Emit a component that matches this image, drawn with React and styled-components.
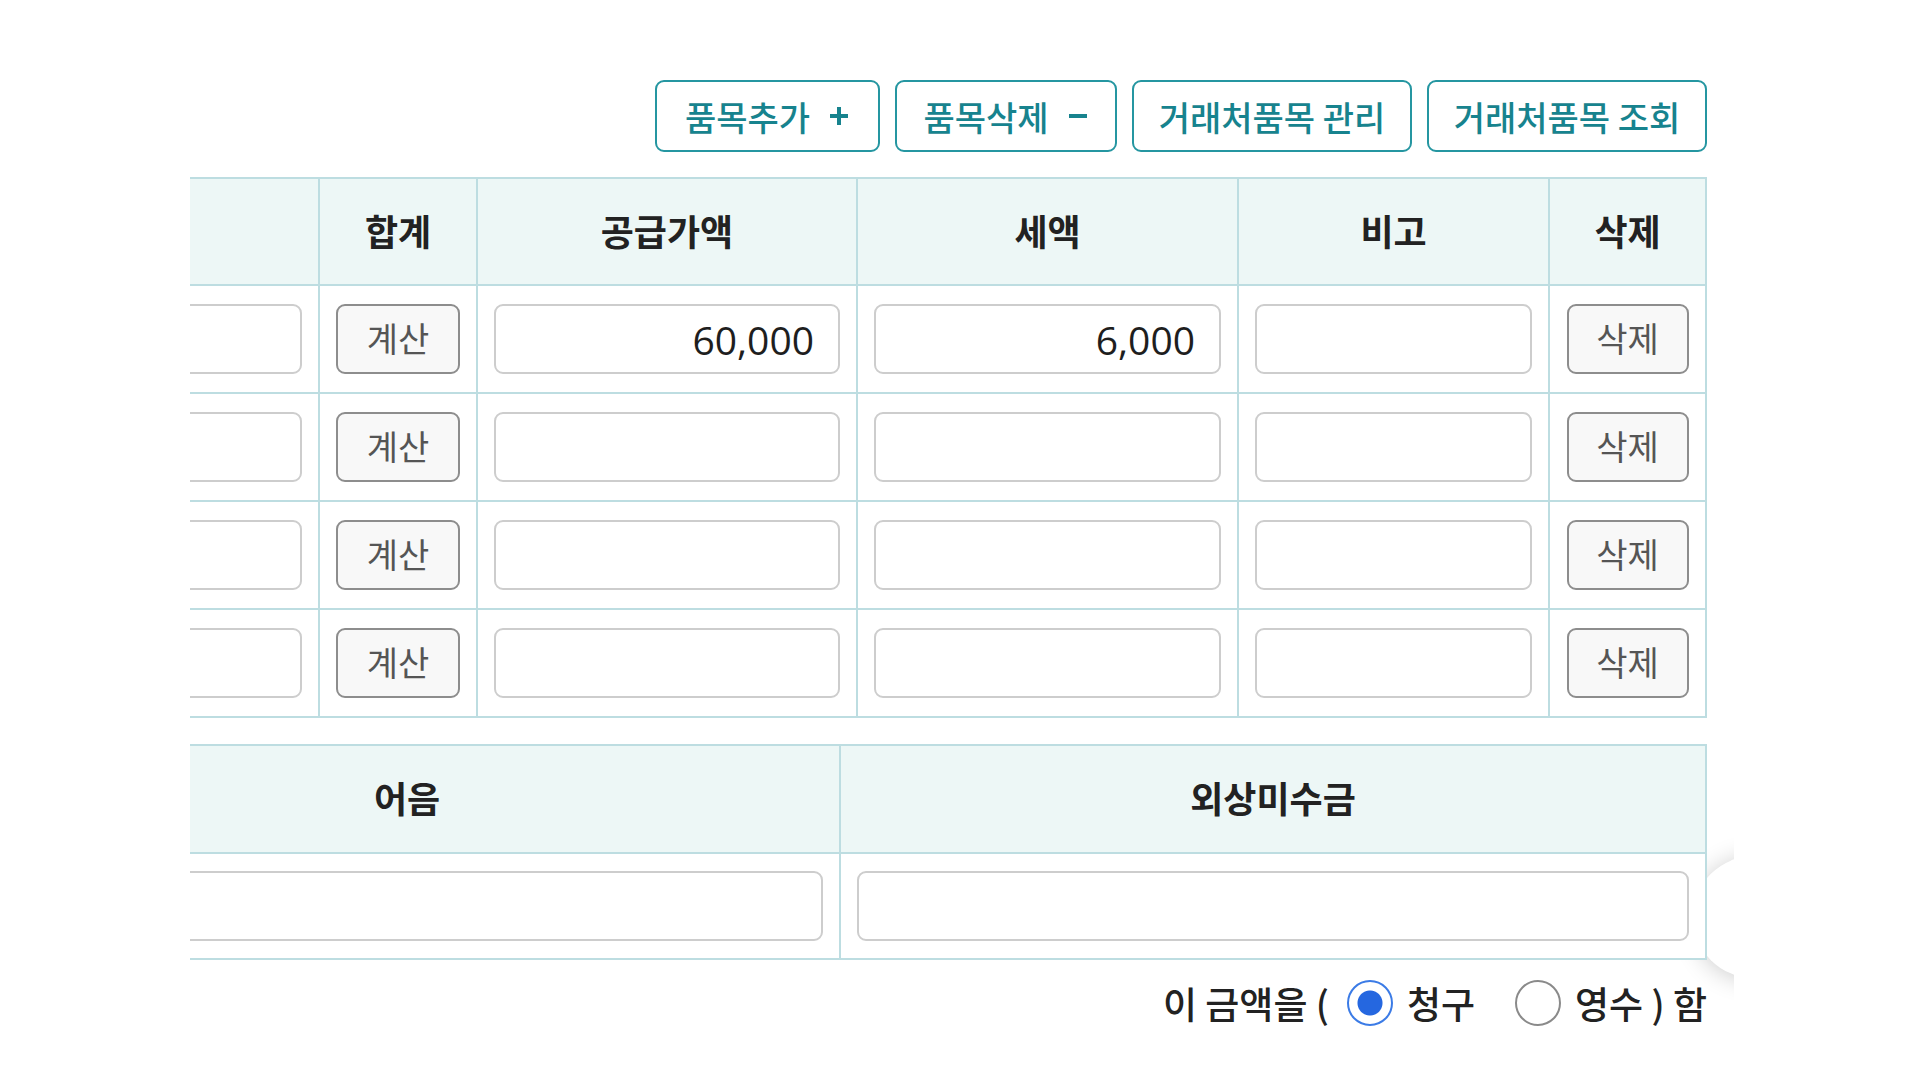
import React from "react";
import styled, { createGlobalStyle } from "styled-components";

const GlobalStyle = createGlobalStyle`
  body {
    margin: 0;
    background: #fff;
    font-family: "Noto Sans CJK KR", "Noto Sans", sans-serif;
    color: #222;
  }
`;

const Frame = styled.div`
  position: relative;
  width: 1734px;
  height: 1080px;
  box-sizing: border-box;
  padding: 80px 27px 0 190px;
  overflow: hidden;
`;

// floating round button peeking out at the right edge, behind the tables
const FloatCircle = styled.div`
  position: absolute;
  left: 1693px;
  top: 856px;
  width: 122px;
  height: 122px;
  border-radius: 50%;
  background: #fff;
  box-shadow: 0 2px 24px rgba(0, 0, 0, 0.2);
  z-index: 0;
`;

const Content = styled.div`
  position: relative;
  z-index: 1;
`;

const Toolbar = styled.div`
  display: flex;
  justify-content: flex-end;
  gap: 15px;
`;

const ToolButton = styled.button`
  display: flex;
  align-items: center;
  justify-content: center;
  gap: 18px;
  width: ${(p) => p.w}px;
  height: 72px;
  box-sizing: border-box;
  padding: 0;
  border: 2px solid #2596a1;
  border-radius: 9px;
  background: #fff;
  color: #17838e;
  font-family: "Noto Sans CJK KR", sans-serif;
  font-size: 34px;
  font-weight: 500;
  svg {
    width: 22px;
    height: 22px;
  }
`;

// the tables are wider than the view; they hang off to the left and are clipped
const TableWrap = styled.div`
  display: flex;
  justify-content: flex-end;
  overflow: hidden;
  margin-top: ${(p) => p.mt}px;
`;

const Table = styled.table`
  flex-shrink: 0;
  border-collapse: collapse;
  table-layout: fixed;
  background: #fff;
  th,
  td {
    border: 2px solid #bddde1;
    box-sizing: border-box;
  }
  th {
    height: ${(p) => p.headH}px;
    padding: 0 0 4px;
    background: #edf7f6;
    font-size: 36px;
    font-weight: 700;
    color: #222;
    text-align: center;
  }
  td {
    height: ${(p) => p.rowH}px;
    padding: 0 16px;
    text-align: center;
  }
`;

const Field = styled.input`
  display: block;
  width: 100%;
  height: 70px;
  box-sizing: border-box;
  border: 2px solid #cdcdcd;
  border-radius: 9px;
  padding: 0 24px;
  background: #fff;
  font-family: "Open Sans", "Noto Sans CJK KR", sans-serif;
  font-size: 39px;
  color: #1e1e1e;
  text-align: right;
  outline: none;
`;

const CellButton = styled.button`
  width: ${(p) => p.w}px;
  height: 70px;
  box-sizing: border-box;
  border: 2px solid #8d8d8d;
  border-radius: 9px;
  background: #f8f8f8;
  color: #555;
  font-family: "Noto Sans CJK KR", sans-serif;
  font-size: 34px;
  padding: 0 0 3px;
`;

const AmountRow = styled.div`
  display: flex;
  justify-content: flex-end;
  align-items: center;
  margin-top: 16px;
  font-size: 37px;
  font-weight: 500;
  color: #222;
  span {
    white-space: pre;
  }
`;

const Radio = styled.span`
  display: inline-block;
  flex-shrink: 0;
  width: 46px;
  height: 46px;
  box-sizing: border-box;
  border-radius: 50%;
  margin: 0 14px 0 ${(p) => p.ml}px;
  border: 2px solid ${(p) => (p.checked ? "#3b7be6" : "#8a8a8a")};
  background: ${(p) =>
    p.checked
      ? "radial-gradient(circle, #2567e0 0 12px, #fff 13px)"
      : "#fff"};
`;

const PlusIcon = () => (
  <svg viewBox="0 0 22 22">
    <path d="M11 2v18M2 11h18" stroke="currentColor" strokeWidth="4" />
  </svg>
);

const MinusIcon = () => (
  <svg viewBox="0 0 22 22">
    <path d="M2 11h18" stroke="currentColor" strokeWidth="4" />
  </svg>
);

const rows = [
  { supply: "60,000", tax: "6,000" },
  { supply: "", tax: "" },
  { supply: "", tax: "" },
  { supply: "", tax: "" },
];

const App = () => {
  return (
    <>
      <GlobalStyle />
      <Frame>
        <FloatCircle />
        <Content>
          <Toolbar>
            <ToolButton w={225}>
              품목추가 <PlusIcon />
            </ToolButton>
            <ToolButton w={222}>
              품목삭제 <MinusIcon />
            </ToolButton>
            <ToolButton w={280}>거래처품목 관리</ToolButton>
            <ToolButton w={280}>거래처품목 조회</ToolButton>
          </Toolbar>

          <TableWrap mt={25}>
            <Table headH={107} rowH={108}>
              <colgroup>
                <col style={{ width: 300 }} />
                <col style={{ width: 402 }} />
                <col style={{ width: 156 }} />
                <col style={{ width: 380 }} />
                <col style={{ width: 381 }} />
                <col style={{ width: 311 }} />
                <col style={{ width: 157 }} />
              </colgroup>
              <thead>
                <tr>
                  <th />
                  <th />
                  <th>합계</th>
                  <th>공급가액</th>
                  <th>세액</th>
                  <th>비고</th>
                  <th>삭제</th>
                </tr>
              </thead>
              <tbody>
                {rows.map((r, i) => (
                  <tr key={i}>
                    <td>
                      <Field readOnly value="" />
                    </td>
                    <td>
                      <Field readOnly value="" />
                    </td>
                    <td>
                      <CellButton w={124}>계산</CellButton>
                    </td>
                    <td>
                      <Field readOnly value={r.supply} />
                    </td>
                    <td>
                      <Field readOnly value={r.tax} />
                    </td>
                    <td>
                      <Field readOnly value="" />
                    </td>
                    <td>
                      <CellButton w={122}>삭제</CellButton>
                    </td>
                  </tr>
                ))}
              </tbody>
            </Table>
          </TableWrap>

          <TableWrap mt={26}>
            <Table headH={108} rowH={106}>
              <colgroup>
                <col style={{ width: 866 }} />
                <col style={{ width: 866 }} />
                <col style={{ width: 866 }} />
              </colgroup>
              <thead>
                <tr>
                  <th />
                  <th>어음</th>
                  <th>외상미수금</th>
                </tr>
              </thead>
              <tbody>
                <tr>
                  <td>
                    <Field readOnly value="" />
                  </td>
                  <td>
                    <Field readOnly value="" />
                  </td>
                  <td>
                    <Field readOnly value="" />
                  </td>
                </tr>
              </tbody>
            </Table>
          </TableWrap>

          <AmountRow>
            <span>이 금액을 (</span>
            <Radio checked ml={18} />
            <span>청구</span>
            <Radio ml={40} />
            <span>영수 ) 함</span>
          </AmountRow>
        </Content>
      </Frame>
    </>
  );
};

export default App;
